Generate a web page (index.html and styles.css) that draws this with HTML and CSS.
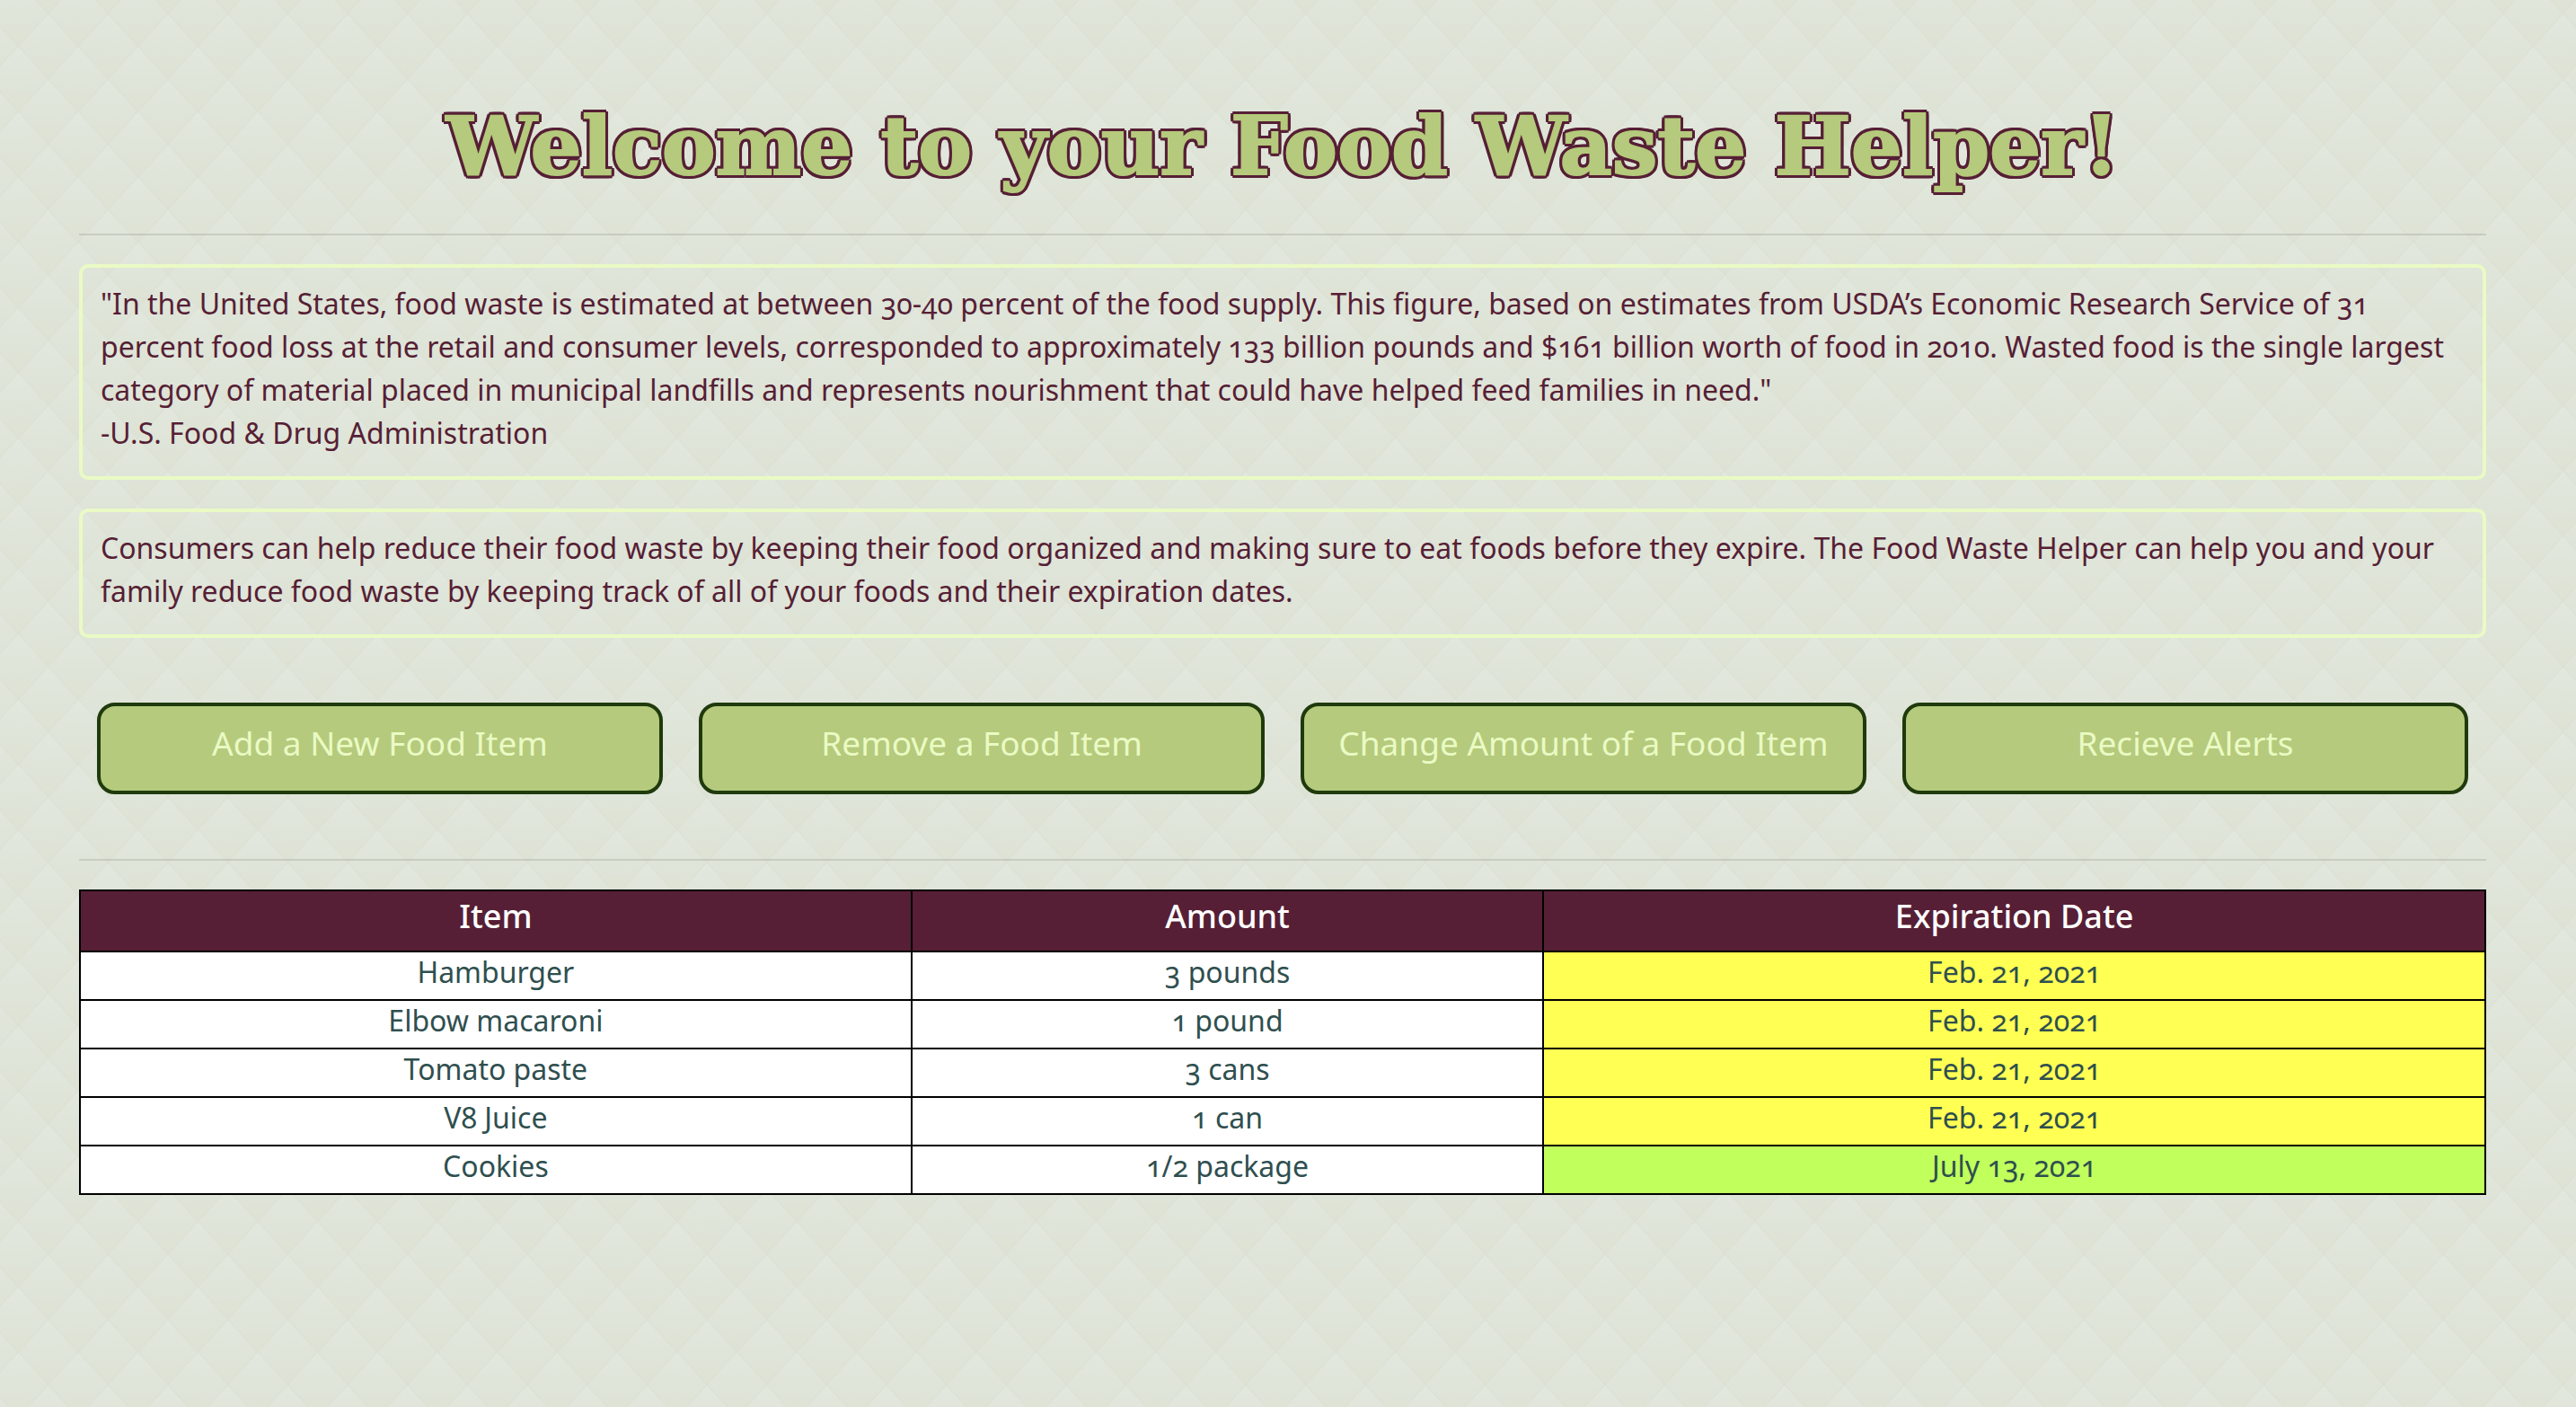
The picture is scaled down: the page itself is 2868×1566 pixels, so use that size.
FILE: index.html
```html
<!DOCTYPE html>
<html lang="en">
<head>
<meta charset="utf-8">
<meta name="viewport" content="width=device-width, initial-scale=1">
<title>Food Waste Helper</title>
<link rel="stylesheet" href="styles.css">
</head>
<body>
<main class="page">
  <h1 class="title">Welcome to your Food Waste Helper!</h1>
  <hr class="rule">
  <div class="notes">
    <blockquote class="note">"In the United States, food waste is estimated at between 30-40 percent of the food supply. This figure, based on estimates from USDA’s Economic Research Service of 31 percent food loss at the retail and consumer levels, corresponded to approximately 133 billion pounds and $161 billion worth of food in 2010. Wasted food is the single largest category of material placed in municipal landfills and represents nourishment that could have helped feed families in need."<br>-U.S. Food &amp; Drug Administration</blockquote>
    <p class="note">Consumers can help reduce their food waste by keeping their food organized and making sure to eat foods before they expire. The Food Waste Helper can help you and your family reduce food waste by keeping track of all of your foods and their expiration dates.</p>
  </div>
  <div class="actions">
    <button class="action" type="button">Add a New Food Item</button>
    <button class="action" type="button">Remove a Food Item</button>
    <button class="action" type="button">Change Amount of a Food Item</button>
    <button class="action" type="button">Recieve Alerts</button>
  </div>
  <hr class="rule">
  <table class="foods">
    <colgroup><col class="col-item"><col class="col-amount"><col class="col-date"></colgroup>
    <thead>
      <tr><th scope="col">Item</th><th scope="col">Amount</th><th scope="col">Expiration Date</th></tr>
    </thead>
    <tbody>
      <tr><td>Hamburger</td><td>3 pounds</td><td class="soon">Feb. 21, 2021</td></tr>
      <tr><td>Elbow macaroni</td><td>1 pound</td><td class="soon">Feb. 21, 2021</td></tr>
      <tr><td>Tomato paste</td><td>3 cans</td><td class="soon">Feb. 21, 2021</td></tr>
      <tr><td>V8 Juice</td><td>1 can</td><td class="soon">Feb. 21, 2021</td></tr>
      <tr><td>Cookies</td><td>1/2 package</td><td class="fresh">July 13, 2021</td></tr>
    </tbody>
  </table>
</main>
</body>
</html>
```
FILE: styles.css
```css
:root {
  --plum: #561f35;
  --leaf: #b5ca7c;
  --lime: #eafac4;
  --forest: #1f3a0c;
}

* {
  box-sizing: border-box;
}

body {
  margin: 0;
  background-color: #dfe5d9;
  background-image: url("data:image/svg+xml,%3Csvg xmlns='http://www.w3.org/2000/svg' width='200' height='218'%3E%3Cdefs%3E%3ClinearGradient id='g' x1='0' y1='0' x2='0' y2='1'%3E%3Cstop offset='0' stop-color='%23e3e8de'/%3E%3Cstop offset='.45' stop-color='%23dfe5d9'/%3E%3Cstop offset='1' stop-color='%23dde2d4'/%3E%3C/linearGradient%3E%3Cpath id='d' d='M0 0L33.333 36.333L0 72.667L-33.333 36.333Z' fill='url(%23g)' stroke='%23dbe0d3' stroke-width='1'/%3E%3Cpattern id='p' width='66.667' height='72.667' patternUnits='userSpaceOnUse'%3E%3Cuse href='%23d'/%3E%3Cuse href='%23d' x='66.667'/%3E%3Cuse href='%23d' x='33.333' y='-36.333'/%3E%3Cuse href='%23d' x='33.333' y='36.333'/%3E%3C/pattern%3E%3C/defs%3E%3Crect width='200' height='218' fill='url(%23p)'/%3E%3C/svg%3E");
  background-position: -13px 15px;
  color: var(--plum);
  font-family: "Noto Sans", sans-serif;
  font-size: 32px;
  line-height: 48px;
  font-variant-numeric: oldstyle-nums;
}

.page {
  padding: 96px 100px 96px 88px;
}

.title {
  margin: 0;
  padding-bottom: 32px;
  color: var(--leaf);
  font-family: "DejaVu Serif", serif;
  font-size: 90px;
  font-weight: 700;
  line-height: 132px;
  text-align: center;
  -webkit-text-stroke: 2px var(--leaf);
  text-shadow:
    4px 0 var(--plum),
    -4px 0 var(--plum),
    0 4px var(--plum),
    0 -4px var(--plum),
    4px 2px var(--plum),
    4px -2px var(--plum),
    -4px 2px var(--plum),
    -4px -2px var(--plum),
    2px 4px var(--plum),
    -2px 4px var(--plum),
    2px -4px var(--plum),
    -2px -4px var(--plum);
}

.rule {
  height: 2px;
  margin: 0 0 32px;
  border: 0;
  background: rgba(0, 0, 0, 0.1);
}

.notes {
  display: flex;
  flex-direction: column;
  gap: 32px;
}

.note {
  margin: 0;
  padding: 16px 20px 24px;
  border: 4px solid var(--lime);
  border-radius: 10px;
}

.actions {
  display: grid;
  grid-template-columns: repeat(4, 1fr);
  gap: 40px;
  padding: 72px 20px;
}

.action {
  padding: 14px 8px 26px;
  border: 4px solid var(--forest);
  border-radius: 20px;
  background: var(--leaf);
  color: var(--lime);
  font: inherit;
  font-size: 37px;
  line-height: 54px;
  white-space: nowrap;
  cursor: pointer;
}

.foods {
  width: 100%;
  border-collapse: collapse;
  table-layout: fixed;
  background: #fff;
  color: #2f4f4f;
  text-align: center;
}

.col-item {
  width: 34.57%;
}

.col-amount {
  width: 26.27%;
}

.foods th,
.foods td {
  padding: 0 8px 8px;
  border: 2px solid #000;
  line-height: 44px;
}

.foods th {
  padding-bottom: 10px;
  background: var(--plum);
  color: #fff;
  font-size: 36px;
  font-weight: 500;
  line-height: 56px;
}

.foods .soon {
  background: #ffff54;
}

.foods .fresh {
  background: #c0ff5c;
}
```
